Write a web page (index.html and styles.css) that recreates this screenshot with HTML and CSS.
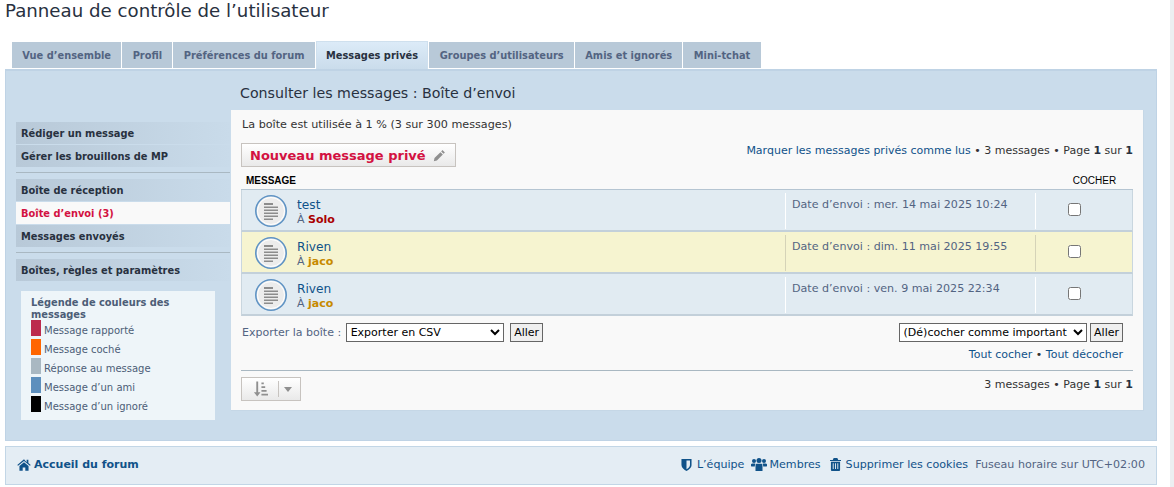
FILE: index.html
```html
<!DOCTYPE html>
<html lang="fr">
<head>
  <meta charset="UTF-8" />
  <title>Panneau de contrôle de l’utilisateur</title>
  <link rel="stylesheet" href="styles.css">
</head>
<body>

<h2 class="page-title">Panneau de contrôle de l’utilisateur</h2>

<div class="tabs">
  <a class="tab">Vue d’ensemble</a>
  <a class="tab">Profil</a>
  <a class="tab">Préférences du forum</a>
  <a class="tab active">Messages privés</a>
  <a class="tab">Groupes d’utilisateurs</a>
  <a class="tab">Amis et ignorés</a>
  <a class="tab">Mini-tchat</a>
</div>

<div class="panel">
  <div class="side">
    <a class="side-item">Rédiger un message</a>
    <a class="side-item">Gérer les brouillons de MP</a>
    <div class="side-sep"></div>
    <a class="side-item">Boîte de réception</a>
    <a class="side-item current">Boîte d’envoi (3)</a>
    <a class="side-item">Messages envoyés</a>
    <div class="side-sep"></div>
    <a class="side-item">Boîtes, règles et paramètres</a>

    <div class="legend">
      <div class="legend-title">Légende de couleurs des messages</div>
      <div class="legend-row"><span class="swatch c-reported"></span>Message rapporté</div>
      <div class="legend-row"><span class="swatch c-marked"></span>Message coché</div>
      <div class="legend-row"><span class="swatch c-reply"></span>Réponse au message</div>
      <div class="legend-row"><span class="swatch c-friend"></span>Message d’un ami</div>
      <div class="legend-row"><span class="swatch c-foe"></span>Message d’un ignoré</div>
    </div>
  </div>

  <div class="main">
    <h2 class="main-title">Consulter les messages : Boîte d’envoi</h2>
    <div class="card">
      <p class="usage">La boîte est utilisée à 1 % (3 sur 300 messages)</p>

      <div class="action-bar">
        <a class="new-btn">Nouveau message privé
          <svg class="pencil" viewBox="0 0 14 14"><path d="M10.2 1.2l2.6 2.6-1.4 1.4-2.6-2.6zM8 3.4L10.6 6l-6.4 6.4-3.3.7.7-3.3z"/></svg>
        </a>
        <div class="pagination"><a class="link">Marquer les messages privés comme lus</a> • 3 messages • Page <b>1</b> sur <b>1</b></div>
      </div>

      <div class="list-head">
        <span class="head-msg">MESSAGE</span>
        <span class="head-mark">COCHER</span>
      </div>

      <div class="rows">
        <div class="row">
          <svg class="topic-icon" viewBox="0 0 32 32"><use href="#msg-icon"/></svg>
          <div class="row-subject">
            <a class="subject">test</a>
            <div class="to">À <b class="user-red">Solo</b></div>
          </div>
          <div class="row-date">Date d’envoi : mer. 14 mai 2025 10:24</div>
          <div class="row-check"><input type="checkbox"></div>
        </div>
        <div class="row yellow">
          <svg class="topic-icon" viewBox="0 0 32 32"><use href="#msg-icon"/></svg>
          <div class="row-subject">
            <a class="subject">Riven</a>
            <div class="to">À <b class="user-gold">jaco</b></div>
          </div>
          <div class="row-date">Date d’envoi : dim. 11 mai 2025 19:55</div>
          <div class="row-check"><input type="checkbox"></div>
        </div>
        <div class="row">
          <svg class="topic-icon" viewBox="0 0 32 32"><use href="#msg-icon"/></svg>
          <div class="row-subject">
            <a class="subject">Riven</a>
            <div class="to">À <b class="user-gold">jaco</b></div>
          </div>
          <div class="row-date">Date d’envoi : ven. 9 mai 2025 22:34</div>
          <div class="row-check"><input type="checkbox"></div>
        </div>
      </div>

      <div class="tools">
        <div class="export">
          Exporter la boîte :
          <select class="export-select"><option>Exporter en CSV</option></select>
          <button class="go">Aller</button>
        </div>
        <div class="mark-tools">
          <div>
            <select class="mark-select"><option>(Dé)cocher comme important</option></select>
            <button class="go">Aller</button>
          </div>
          <div class="mark-links"><a class="link">Tout cocher</a> • <a class="link">Tout décocher</a></div>
        </div>
      </div>

      <div class="bottom-bar">
        <div class="sort-btn">
          <svg class="sort-icon" viewBox="0 0 16 16"><path d="M3.500 0h2v11.500h2.500L4.500 16 1 11.500h2.500zM9 1h2.500v2H9zM9 5h4v2H9zM9 9h5.500v2H9zM9 13h7v2H9z"/></svg>
          <span class="sort-sep"></span>
          <span class="caret"></span>
        </div>
        <div class="pagination">3 messages • Page <b>1</b> sur <b>1</b></div>
      </div>
    </div>
  </div>
</div>

<div class="footer">
  <a class="home-link">
    <svg class="ico" viewBox="0 0 16 14"><path d="M8 1L.3 7.500l.9 1L8 2.900l6.800 5.600.9-1-2.700-2.300V1.500h-2v3zM2.800 8.700V14h3.700v-3.700h3V14h3.700V8.700L8 4.400z"/></svg>
    Accueil du forum
  </a>
  <div class="footer-right">
    <a class="foot-link"><svg class="ico shield" viewBox="0 0 12 14"><path d="M.5 1h11v6.500c0 3-3 5.200-5.500 6.500C3.500 12.700.5 10.500.5 7.500zM6 2.600v9.700c1.800-1 3.800-2.800 3.800-4.800V2.600z"/></svg>L’équipe</a>
    <a class="foot-link members"><svg class="ico users" viewBox="0 0 16 13"><circle cx="3" cy="3" r="2"/><circle cx="13" cy="3" r="2"/><circle cx="8" cy="2.500" r="2.500"/><path d="M0 6.500C0 5.700.8 5.500 3 5.500c.5 0 1 .1 1.400.3C4 6.600 3.800 7.500 3.800 8.500H.5c-.3 0-.5-.2-.5-.5zM16 6.500c0-.8-.8-1-3-1-.5 0-1 .1-1.400.3.4.8.6 1.700.6 2.700h3.300c.3 0 .5-.2.500-.5zM5.500 5.800h5c.8 0 1 1 1 3.500V13h-7V9.300c0-2.500.2-3.500 1-3.500z"/></svg>Membres</a>
    <a class="foot-link cookies"><svg class="ico trash" viewBox="0 0 12 14"><path d="M4 0h4l1 2h3v1.300H0V2h3zM1 4h10v9c0 .6-.4 1-1 1H2c-.6 0-1-.4-1-1zm2 1.500V12h1V5.500zm2.500 0V12h1V5.500zm2.500 0V12h1V5.500z" fill-rule="evenodd"/></svg>Supprimer les cookies</a>
    <span class="timezone">Fuseau horaire sur UTC+02:00</span>
  </div>
</div>

<svg class="defs" width="0" height="0">
  <defs>
    <g id="msg-icon">
      <circle cx="16" cy="16" r="15.200" fill="#f0f0f0" stroke="#5f93c4" stroke-width="1.600"/>
      <circle cx="16" cy="16" r="13.500" fill="#ececec" stroke="#fff" stroke-width="1"/>
      <path d="M9 8h9v2H9zM9 11.500h14v1.500H9zM9 14.500h14V16H9zM9 17.500h14V19H9zM9 20.500h14V22H9zM9 23.500h9V25H9z" fill="#8c8c8c"/>
    </g>
  </defs>
</svg>

</body>
</html>
```

FILE: styles.css
```css
* { box-sizing: border-box; }

html { background: #fff; }

body {
  margin: 0;
  padding: 0 13px 0 5px;
  height: 487px;
  overflow: hidden;
  font-family: "DejaVu Sans", Verdana, sans-serif;
  font-size: 11px;
  line-height: 13px;
  color: #536482;
  background: #fff;
  border-right: 4px solid #eceff1;
}

a { text-decoration: none; }

.page-title {
  margin: 0;
  height: 41px;
  font-family: "DejaVu Sans", sans-serif;
  font-weight: 400;
  font-size: 18.200px;
  line-height: 22px;
  color: #28313f;
}

/* tabs */
.tabs {
  display: flex;
  gap: 1px;
  padding: 0 0 1px 7px;
  height: 28px;
  align-items: flex-end;
}

.tab {
  height: 26px;
  padding: 7px 10.300px 0;
  background: #b8c9d8;
  color: #536482;
  font-weight: 700;
  font-size: 9.850px;
  white-space: nowrap;
}

.tab.active {
  height: 28px;
  padding: 7px 9.300px 0;
  margin-bottom: -1px;
  background: linear-gradient(#dcebf8, #cadceb);
  border: 1px solid #cfe0ee;
  border-bottom: 0;
  color: #28313f;
  position: relative;
}

/* main panel */
.panel {
  display: flex;
  height: 372px;
  padding: 0 12px 0 10px;
  background: #cadceb;
  border: 1px solid #bfd3e5;
  border-top-width: 2px;
}

.side { width: 214px; flex: none; padding-top: 51px; }

.side-item {
  display: block;
  height: 22px;
  margin-bottom: 1px;
  padding: 5px 5px 0;
  background: linear-gradient(to right, #b8c9d8, #c9dbea);
  color: #28313f;
  font-weight: 700;
  font-size: 9.850px;
}

.side-item.current { background: #f9f9f9; color: #d31141; }

.side-sep { height: 1px; margin: 5px 0 6px; background: #a9b8c2; }

.legend {
  margin: 10px 15px 0 5px;
  height: 129px;
  padding: 6px 10px 0;
  background: #eef5f9;
  font-size: 10px;
  color: #4c5d77;
}

.legend-title { height: 23px; font-weight: 700; font-size: 9.850px; line-height: 12px; color: #4c5d77; }

.legend-row { display: flex; align-items: flex-start; gap: 3px; height: 19px; line-height: 22px; white-space: nowrap; }

.swatch { width: 10px; height: 16px; flex: none; }
.c-reported { background: #bc2a4d; }
.c-marked { background: #ff6600; }
.c-reply { background: #a9b8c2; }
.c-friend { background: #5d8fbd; }
.c-foe { background: #000; }

.main { flex: 1; margin-left: 1px; min-width: 0; }

.main-title {
  margin: 0;
  height: 39px;
  padding: 12px 0 0 9px;
  font-family: "DejaVu Sans", sans-serif;
  font-weight: 400;
  font-size: 14.200px;
  line-height: 20px;
  color: #28313f;
}

.card {
  height: 301px;
  padding: 8px 10px 0;
  background: #f9f9f9;
  border: 1px solid #c5d7e6;
  border-width: 0 1px 1px 0;
}

.usage { margin: 0; height: 25px; color: #333; font-size: 11.200px; padding-left: 1px; }

.action-bar { display: flex; justify-content: space-between; align-items: flex-start; height: 31px; }

.new-btn {
  display: flex;
  align-items: center;
  gap: 7px;
  height: 24px;
  padding: 0 9px 0 8px;
  background: linear-gradient(#fff, #e9e9e9);
  border: 1px solid #c7c3bf;
  color: #d31141;
  font-weight: 700;
  font-size: 13px;
}

.pencil { width: 13px; height: 13px; fill: #8f8f8f; }

.pagination { padding-top: 1px; color: #333; font-size: 11px; white-space: nowrap; }
.pagination b { color: #28313f; }

.link { color: #105289; }

.list-head { display: flex; justify-content: space-between; height: 15px; color: #000; font-family: "Liberation Sans", Arial, sans-serif; }
.head-msg { padding-left: 5px; font-weight: 700; font-size: 10px; }
.head-mark { width: 99px; text-align: center; font-size: 10px; padding-left: 22px; }

.rows { border-top: 1px solid #b5c5d2; }

.row {
  display: flex;
  height: 42px;
  background: #e1ebf2;
  border: 1px solid #c9d6df;
  border-top: 0;
  border-bottom: 2px solid #c3d0da;
}

.row.yellow { background: #f6f4d0; }

.topic-icon { width: 32px; height: 32px; flex: none; margin: 5px 0 0 13px; }

.row-subject { flex: 1; padding: 8px 0 0 10px; }

.subject { display: block; font-size: 12.200px; line-height: 15px; color: #105289; }

.to { font-size: 11px; line-height: 14px; }
.user-red { color: #aa0000; }
.user-gold { color: #c78900; }

.row-date {
  width: 251px;
  height: 36px;
  margin-top: 3px;
  padding: 5px 0 0 6px;
  border-left: 1px solid #fff;
  border-right: 1px solid #fff;
  font-size: 11.100px;
  white-space: nowrap;
  flex: none;
}

.yellow .row-date { border-color: #d5d3b8; }

.row-check { width: 96px; flex: none; display: flex; justify-content: center; padding-top: 10px; padding-right: 20px; }
.row-check input { margin: 3px 0 0; width: 13px; height: 13px; }

.tools { display: flex; justify-content: space-between; padding: 7px 1px 0 1px; height: 55px; border-bottom: 1px solid #a9b8c2; font-size: 11px; }

.export { white-space: nowrap; }

.export-select {
  width: 158px;
  height: 19px;
  margin-left: 1px;
  font-family: "DejaVu Sans", sans-serif;
  font-size: 11px;
  background: #fff;
  border: 1px solid #666;
  color: #000;
}

.mark-tools { text-align: right; padding-right: 9px; }
.mark-tools .go { margin-left: 0; }

.mark-select {
  width: 188px;
  height: 19px;
  font-family: "DejaVu Sans", sans-serif;
  font-size: 11px;
  background: #fff;
  border: 1px solid #666;
  color: #000;
}

.go {
  height: 19px;
  padding: 0 3px;
  margin-left: 3px;
  background: #efefef;
  border: 1px solid #666;
  font-family: "DejaVu Sans", sans-serif;
  font-size: 11px;
  color: #000;
}

.mark-links { margin-top: 6px; color: #333; font-size: 11px; }

.bottom-bar { display: flex; justify-content: space-between; padding-top: 6px; }

.sort-btn {
  display: flex;
  align-items: center;
  width: 60px;
  height: 24px;
  padding-left: 11px;
  background: linear-gradient(#fff, #e9e9e9);
  border: 1px solid #c7c3bf;
}

.sort-icon { width: 15px; height: 16px; fill: #8f8f8f; }
.sort-sep { width: 1px; height: 16px; margin-left: 10px; background: #c7c3bf; }
.caret { margin-left: 5px; border: 4px solid transparent; border-top: 5px solid #8f8f8f; border-bottom: 0; width: 0; height: 0; }

/* footer */
.footer {
  display: flex;
  justify-content: space-between;
  align-items: center;
  height: 39px;
  margin-top: 5px;
  padding: 0 11px 2px 11px;
  background: #e4edf4;
  border: 1px solid #c2d6e6;
}

.home-link { color: #105289; font-weight: 700; font-size: 11px; display: flex; align-items: center; gap: 3px; }

.footer-right { display: flex; align-items: center; gap: 7px; font-size: 11.100px; white-space: nowrap; }

.foot-link { color: #105289; display: flex; align-items: center; gap: 5px; }
.foot-link.members { gap: 2px; }
.foot-link.cookies { margin-left: 2px; }

.timezone { color: #536482; }

.ico { fill: #105289; height: 13px; width: auto; flex: none; }
.home-link .ico { width: 14px; }
.shield { width: 11px; }
.users { width: 16px; }
.trash { width: 11px; }

.defs { display: block; height: 0; }
```
